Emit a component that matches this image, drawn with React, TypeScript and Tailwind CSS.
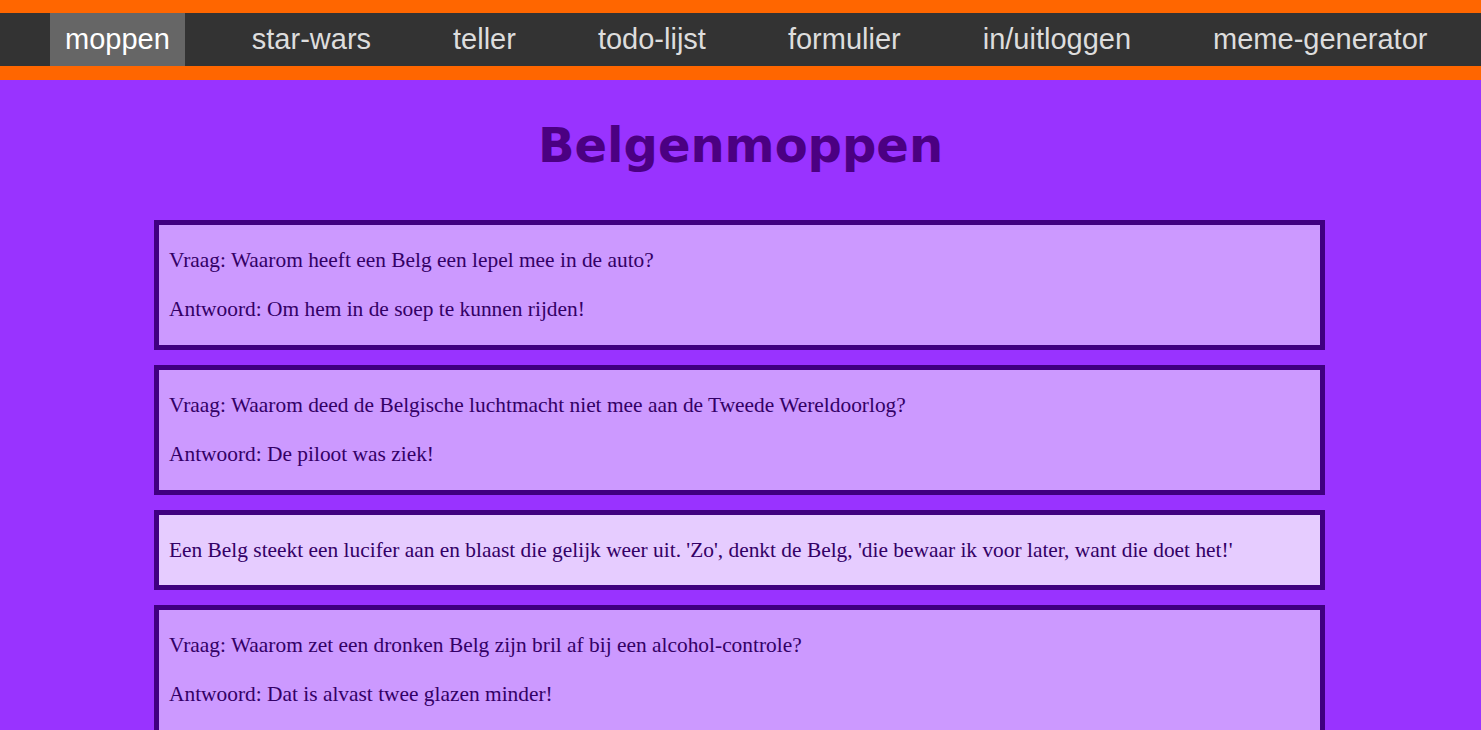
const links = [
  "moppen",
  "star-wars",
  "teller",
  "todo-lijst",
  "formulier",
  "in/uitloggen",
  "meme-generator",
];

type Mop = { vraag?: string; antwoord?: string; tekst?: string };

const moppen: Mop[] = [
  {
    vraag: "Waarom heeft een Belg een lepel mee in de auto?",
    antwoord: "Om hem in de soep te kunnen rijden!",
  },
  {
    vraag: "Waarom deed de Belgische luchtmacht niet mee aan de Tweede Wereldoorlog?",
    antwoord: "De piloot was ziek!",
  },
  {
    tekst:
      "Een Belg steekt een lucifer aan en blaast die gelijk weer uit. 'Zo', denkt de Belg, 'die bewaar ik voor later, want die doet het!'",
  },
  {
    vraag: "Waarom zet een dronken Belg zijn bril af bij een alcohol-controle?",
    antwoord: "Dat is alvast twee glazen minder!",
  },
];

const Nav = () => {
  return (
    <nav className="border-t-[13px] border-b-[14px] border-[#ff6600] bg-[#333333]">
      <ul className="flex h-[53px] items-stretch gap-[52px] pl-[50px] font-['Liberation_Sans',Arial,sans-serif] text-[29px]">
        {links.map((link, i) => (
          <li
            key={link}
            className={
              i === 0
                ? "flex items-center bg-[#666666] px-[15px] text-white"
                : "flex items-center px-[15px] text-[#dddddd]"
            }
          >
            {link}
          </li>
        ))}
      </ul>
    </nav>
  );
};

const MopKaart = ({ mop }: { mop: Mop }) => {
  const light = !!mop.tekst;
  return (
    <div
      className={
        light
          ? "border-[5px] border-[#400080] bg-[#e6ccff] px-[10px] pt-[23px] pb-[23px]"
          : "border-[5px] border-[#400080] bg-[#cc99ff] px-[10px] pt-[23px] pb-[24px]"
      }
    >
      {mop.tekst ? (
        <p>{mop.tekst}</p>
      ) : (
        <div className="flex flex-col gap-[25px]">
          <p>Vraag: {mop.vraag}</p>
          <p>Antwoord: {mop.antwoord}</p>
        </div>
      )}
    </div>
  );
};

export default function App() {
  return (
    <div className="min-h-screen bg-[#9933ff]">
      <Nav />
      <main className="pt-[37px] pb-10">
        <h1 className="mb-[47px] text-center font-['DejaVu_Sans',Verdana,sans-serif] text-[48px] leading-[56px] font-bold text-[#4b0082]">
          Belgenmoppen
        </h1>
        <div className="ml-[154px] flex w-[1171px] flex-col gap-[15px] font-['Liberation_Serif','Times_New_Roman',serif] text-[21.4px] leading-[24px] text-[#330066]">
          {moppen.map((mop, i) => (
            <MopKaart key={i} mop={mop} />
          ))}
        </div>
      </main>
    </div>
  );
}
